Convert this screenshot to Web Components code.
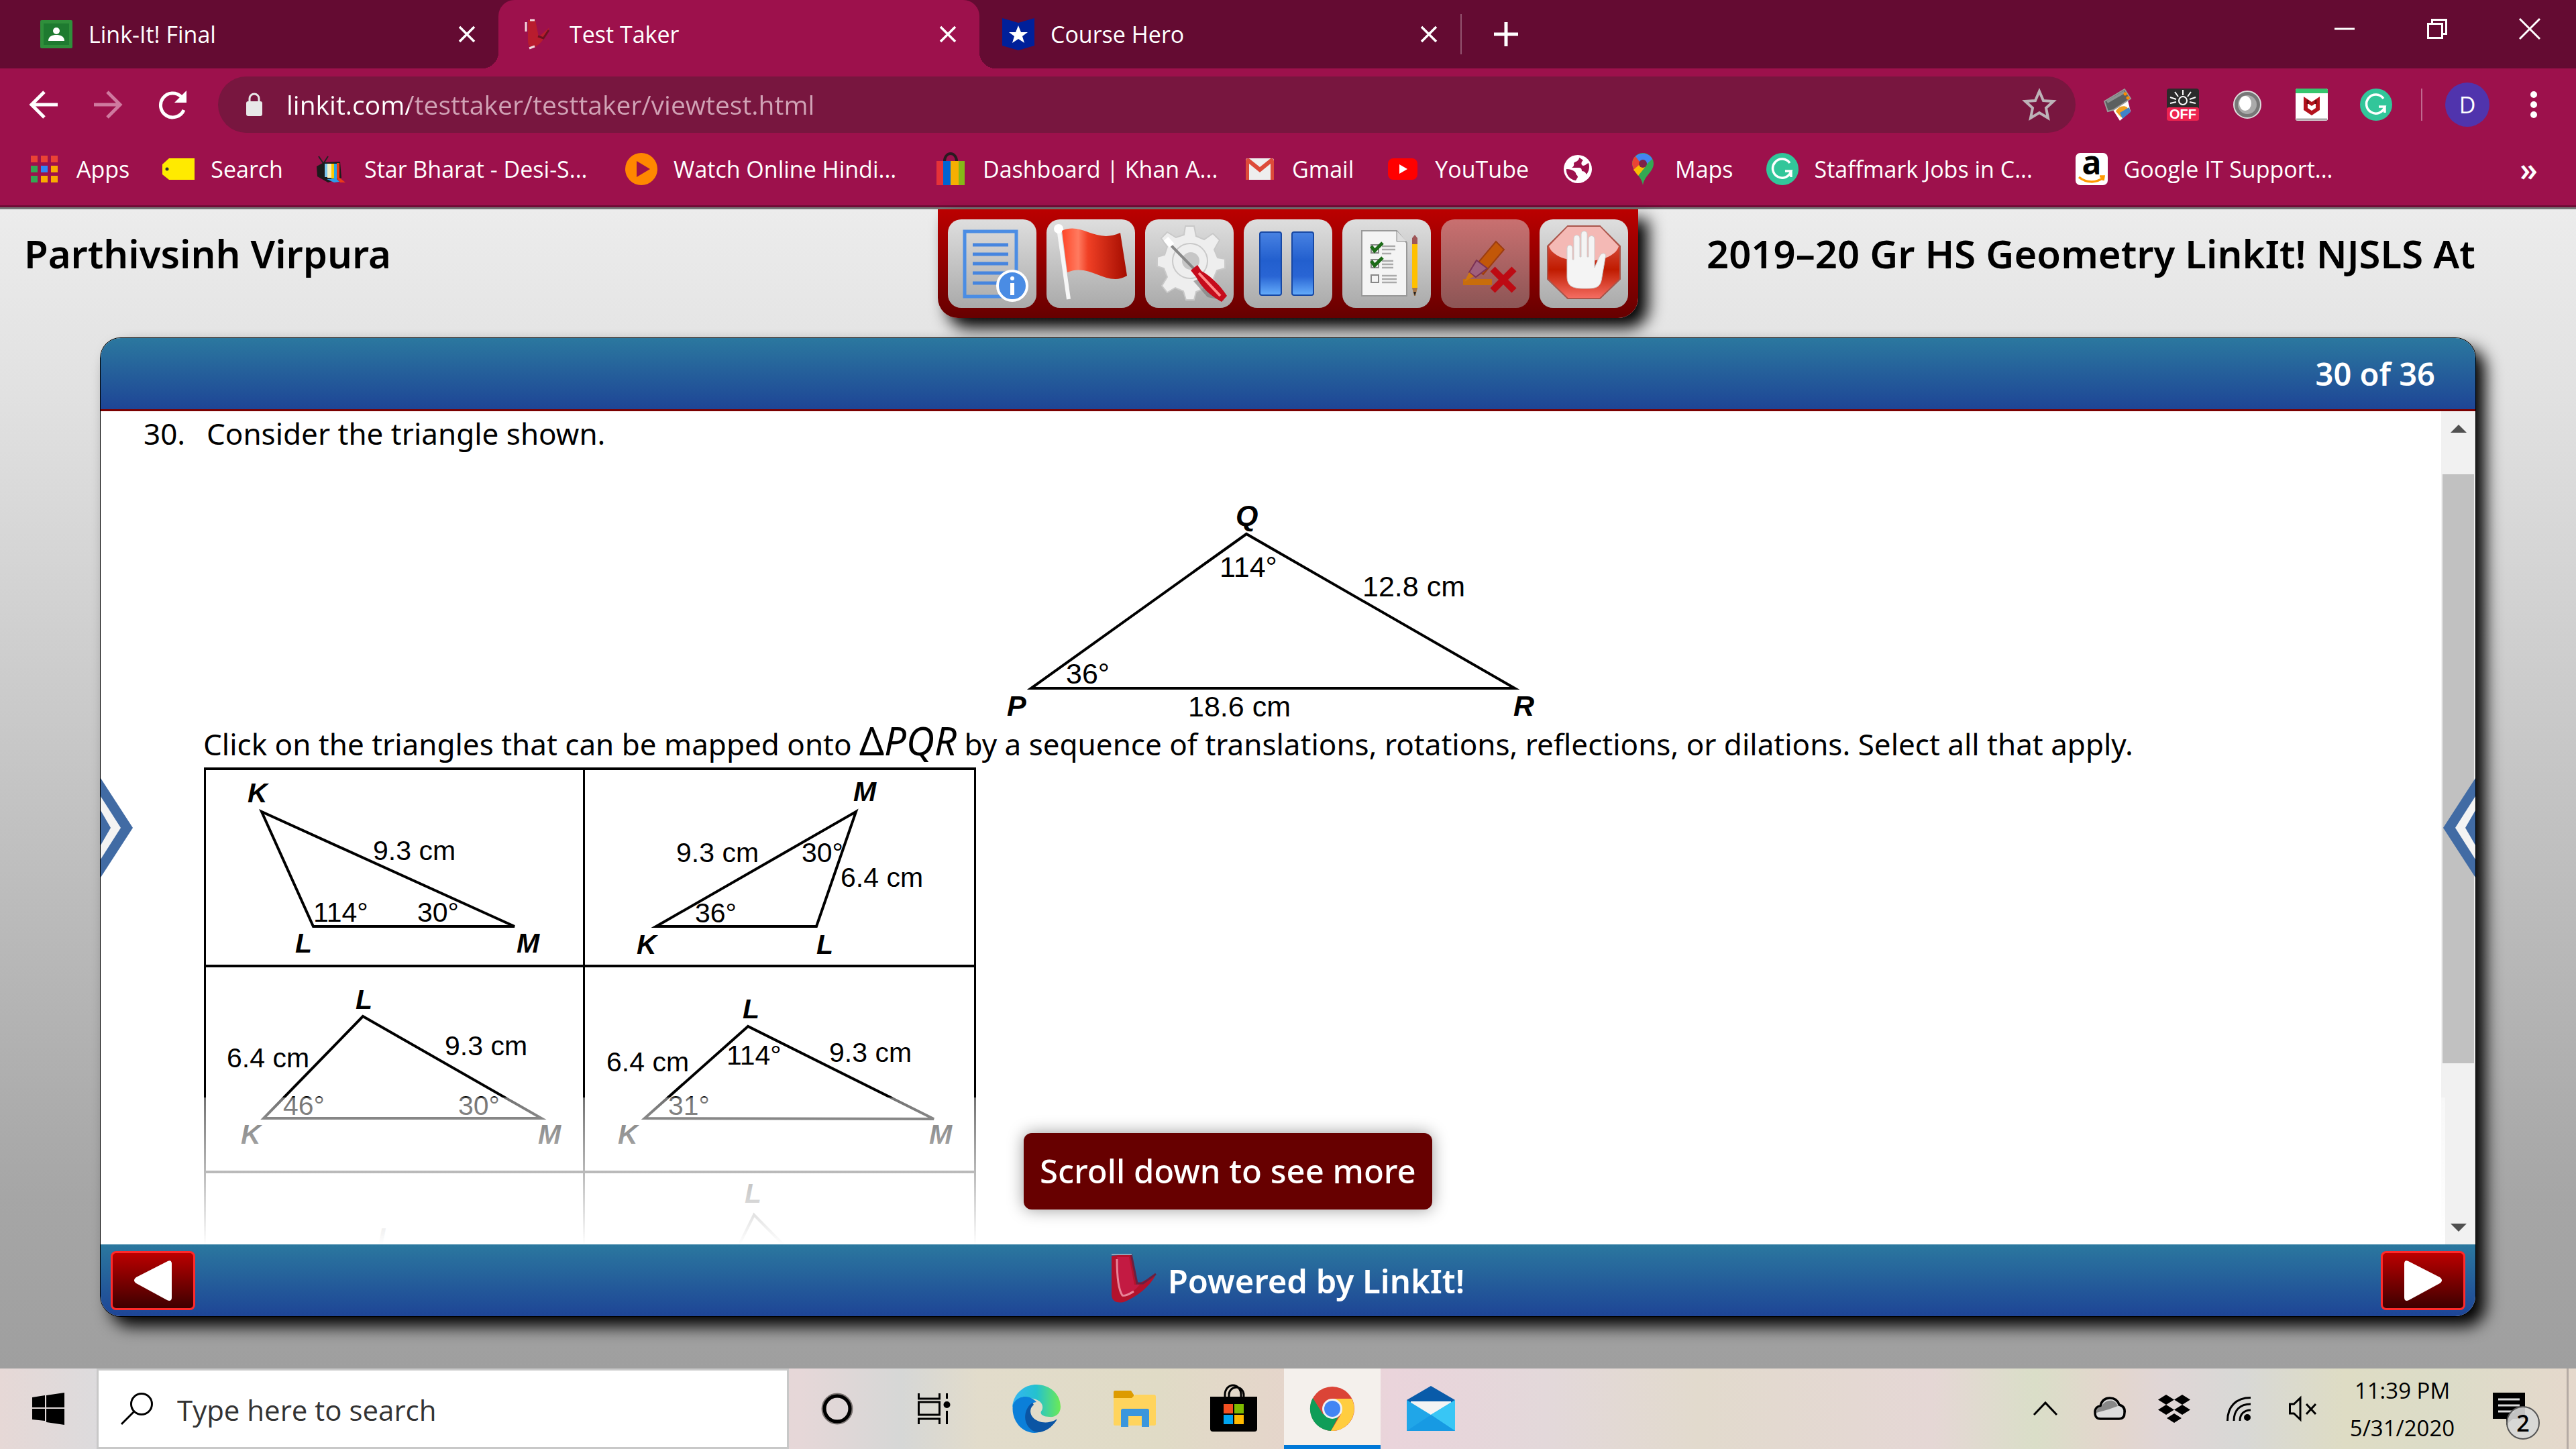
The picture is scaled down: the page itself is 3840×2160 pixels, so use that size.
<!DOCTYPE html>
<html lang="en">
<head>
<meta charset="utf-8">
<title>Test Taker</title>
<style>
html, body {
	margin: 0;
	height: 100%;
}

body {
	--ui-font: "Open Sans", "Noto Sans", sans-serif;
	--page-font: "Noto Sans", "Open Sans", sans-serif;
	--color-frame: #640b32;
	--color-toolbar: #9d114c;
	font-family: var(--ui-font);
	overflow: hidden;
}
</style>
</head>
<body>
<test-screen></test-screen>

<script>
const icons = {
	classroom: ['0 0 48 48', `<rect y="3" width="48" height="42" rx="2" fill="#2f8f3b"/><rect x="5" y="8" width="38" height="32" fill="#1e7a30"/><circle cx="24" cy="19" r="5" fill="#fff"/><path d="M12 34c0-7 6-9 12-9s12 2 12 9z" fill="#fff"/>`],
	linkit: ['0 0 48 48', `<path d="M10 3h11l5 25 16-14c-5 12-12 26-24 30-7 1-8-6-8-12z" fill="#b91c2e"/><path d="M7 6v14M20 3l-7 0M12 45l8-3" stroke="#f3d8dc" stroke-width="3"/><path d="M25 27l8 3 8-12" fill="none" stroke="#6c1220" stroke-width="3"/>`],
	linkitBig: ['0 0 72 84', `<path d="M0 5l29-3 9 46 28-15C57 51 38 66 18 74 6 76 1 72 0 64z" fill="#b3122c"/><path d="M8 7h18l8 41 8 0C34 58 26 62 17 64 11 60 8 38 8 7z" fill="#c31a42"/><path d="M8 10c0 25 2 45 8 54 5 2 12-3 17-6" fill="none" stroke="#e88498" stroke-width="3"/><path d="M29 2l9 44 9 0 19-14" fill="none" stroke="#6a2040" stroke-width="3"/><path d="M0 3h30" stroke="#8fa5ba" stroke-width="2"/>`],
	hero: ['0 0 48 48', `<path d="M0 0l24 7 24-7v41l-24 7-24-7z" fill="#00209a"/><path d="M24 11l4 10h10l-8 6 3 10-9-6-9 6 3-10-8-6h10z" fill="#fff"/>`],
	close: ['0 0 24 24', `<path d="M1 1l22 22M23 1L1 23" stroke="#fff" stroke-width="3.6"/>`],
	plus: ['0 0 36 36', `<path d="M18 0v36M0 18h36" stroke="#fff" stroke-width="5"/>`],
	minimize: ['0 0 30 30', `<path d="M0 15h30" stroke="#fff" stroke-width="3"/>`],
	restore: ['0 0 30 30', `<path d="M1.500 7.500h21v21h-21zM7.500 7V1.500h21v21H23" fill="none" stroke="#fff" stroke-width="3"/>`],
	exit: ['0 0 30 30', `<path d="M0 0l30 30M30 0L0 30" stroke="#fff" stroke-width="3"/>`],
	back: ['0 0 42 42', `<path d="M42 21H4M22 2L3 21l19 19" fill="none" stroke="currentColor" stroke-width="5"/>`],
	forward: ['0 0 42 42', `<path d="M0 21h38M20 2l19 19-19 19" fill="none" stroke="currentColor" stroke-width="5"/>`],
	reload: ['0 0 42 42', `<path d="M38 29A18 18 0 1 1 34 9" fill="none" stroke="#fff" stroke-width="5"/><path d="M42 0v18H24z" fill="#fff"/>`],
	lock: ['0 0 24 34', `<rect y="12" width="24" height="22" rx="3" fill="#e8e8e8"/><path d="M5 13V8a7 7 0 0 1 14 0v5" fill="none" stroke="#e8e8e8" stroke-width="3"/>`],
	star: ['0 0 48 48', `<path d="M24 4l6 14 15 1-11 10 3 15-13-8-13 8 3-15L3 19l15-1z" fill="none" stroke="#bdb3b8" stroke-width="4"/>`],
	scanner: ['0 0 48 48', `<path d="M12 26l14 22 16-14-4-16z" fill="#fff"/><path d="M20 34c3-7 12-10 17-6 4 6-2 14-9 15z" fill="#f0a020"/><path d="M26 36l14-8 2 7-12 10z" fill="#3f83c9"/><path d="M3 19L33 1l9 14-26 17-8 2z" fill="#5b5f5f" stroke="#999" stroke-width="2"/><path d="M7 20L33 5" stroke="#8d9292" stroke-width="4"/><circle cx="34" cy="8" r="2.500" fill="#ff8b00"/><circle cx="38" cy="14" r="2.500" fill="#ff8b00"/>`],
	lightOff: ['0 0 48 48', `<rect width="48" height="48" rx="4" fill="#2b2b2b"/><circle cx="24" cy="18" r="6" fill="none" stroke="#fff" stroke-width="2"/><path d="M24 2v8M12 5l5 7M36 5l-5 7M5 13l9 3M43 13l-9 3M5 22l9-2M43 22l-9-2" stroke="#fff" stroke-width="2"/><rect y="28" width="48" height="20" rx="3" fill="#ed2350"/><text x="24" y="45" text-anchor="middle" font-family="Liberation Sans" font-weight="700" font-size="20" fill="#fff">OFF</text>`],
	orb: ['0 0 48 48', `<circle cx="24" cy="24" r="20" fill="#777" stroke="#ddd" stroke-width="2"/><circle cx="24" cy="24" r="14" fill="#aaa"/><ellipse cx="21" cy="22" rx="9" ry="11" fill="#fff"/>`],
	mcafee: ['0 0 48 48', `<rect width="48" height="48" rx="3" fill="#fff"/><path d="M0 7V3a3 3 0 0 1 3-3h42a3 3 0 0 1 3 3v4z" fill="#35c66e"/><path d="M1 46h46" stroke="#aaa" stroke-width="3"/><path d="M12 12l12 8 12-8v20l-12 8-12-8z" fill="#b3111c"/><path d="M18 22l6 4 6-4v7l-6 4-6-4z" fill="#fff"/><path d="M18 17v6M30 17v6" stroke="#6c0b12" stroke-width="3"/>`],
	grammarly: ['0 0 48 48', `<circle cx="24" cy="24" r="24" fill="#32c69a"/><path d="M35 15A14 14 0 1 0 37 27H28M37 26v10" fill="none" stroke="#fff" stroke-width="3.500"/>`],
	dots: ['0 0 12 42', `<g fill="#fff"><circle cx="6" cy="6" r="5"/><circle cx="6" cy="21" r="5"/><circle cx="6" cy="36" r="5"/></g>`],
	apps: ['0 0 48 48', `<g fill="#ea4335"><path d="M4 4h10v10H4zM19 4h10v10H19zM34 4h10v10H34z"/></g><path d="M4 19h10v10H4zM4 34h10v10H4z" fill="#34a853"/><path d="M19 19h10v10H19z" fill="#2f86f6"/><path d="M34 19h10v10H34zM19 34h10v10H19zM34 34h10v10H34z" fill="#f9ab00"/>`],
	tag: ['0 0 48 48', `<path d="M10 8h38v32H10L0 32V17z" fill="#ffea00"/><circle cx="7" cy="24" r="2.500" fill="#333"/>`],
	tv: ['0 0 48 48', `<path d="M4 5l8 12M18 5l-7 11" stroke="#222" stroke-width="2"/><path d="M1 20l11-6 24-1 2 24-20 7L2 35z" fill="#1b1b1b"/><path d="M13 16h4v20h-4z" fill="#7cc6ef"/><path d="M17 16h6v21h-6z" fill="#f2efc3"/><path d="M23 16h4v22h-4z" fill="#ffc900"/><path d="M27 16h4v24h-4z" fill="#28a5e8"/><path d="M31 15h4v22l9 7-8 0-5-6z" fill="#ea3b18"/><path d="M16 39l14-1 5 5-8 1z" fill="#2d9cea"/>`],
	play: ['0 0 48 48', `<circle cx="24" cy="24" r="24" fill="#ff8800"/><path d="M17 12l20 12-20 12z" fill="#9d114c"/>`],
	bag: ['0 0 48 48', `<path d="M15 12a9 11 0 0 1 18 0" fill="none" stroke="#2a1a20" stroke-width="4"/><path d="M3 12h10v36H3z" fill="#e53238"/><path d="M13 12h11v36H13z" fill="#0064d2"/><path d="M24 12h12v36H24z" fill="#f5af02"/><path d="M36 12h9v36h-9z" fill="#86b817"/>`],
	gmail: ['0 0 48 48', `<rect x="3" y="8" width="42" height="32" rx="3" fill="#eee"/><path d="M3 12v28h5V16l16 13 16-13v24h5V12c0-4-4-5-6-3L24 21 9 9c-2-2-6-1-6 3z" fill="#dd4b39"/>`],
	youtube: ['0 0 48 48', `<rect x="2" y="8" width="44" height="32" rx="8" fill="#f00"/><path d="M19 17l12 7-12 7z" fill="#fff"/>`],
	globe: ['0 0 48 48', `<circle cx="24" cy="24" r="21" fill="#fff"/><path d="M26 7c0 5-6 6-8 8 1 4-1 6-3 7h11c4 0 4 4 4 5 4 0 6 3 7 5 4-5 5-12 3-17-3 1-5 4-8 4-4-1-3-6 0-8-2-1-3-3-6-4z" fill="#9d114c"/><path d="M7 24c6 0 12 2 14 6 0 3 3 3 3 6l-3 5C12 40 6 32 7 24z" fill="#9d114c"/>`],
	maps: ['0 0 48 48', `<path d="M24 48C22 34 8 28 8 16A16 16 0 0 1 24 0a16 16 0 0 1 16 16C40 28 26 34 24 48z" fill="#34a853"/><path d="M8 17A16 16 0 0 1 14 4l10 12-13 11z" fill="#ea4335"/><path d="M13 5A16 16 0 0 1 38 9L25 21z" fill="#4285f4"/><path d="M10 25l14-12 5 6-12 15z" fill="#fbbc04"/><circle cx="24" cy="16" r="6" fill="#7d2149"/>`],
	amazon: ['0 0 48 48', `<rect width="48" height="48" rx="7" fill="#fff"/><text x="24" y="32" text-anchor="middle" font-family="Open Sans" font-weight="700" font-size="48" fill="#000">a</text><path d="M5 36c11 9 26 9 36 1M36 35l6 0-1 6" fill="none" stroke="#ff9900" stroke-width="3.500"/>`],
	info: ['0 0 132 132', `<path d="M25 18h77v97H25z" fill="none" stroke="#4b8de4" stroke-width="5"/><path d="M37 38h53M37 52h53M37 66h53M37 80h53M37 95h38" stroke="#4685df" stroke-width="5"/><circle cx="96" cy="99" r="22" fill="#4a8ce4" stroke="#fff" stroke-width="4"/><circle cx="96" cy="88" r="3" fill="#fff"/><path d="M96 95v18" stroke="#fff" stroke-width="6"/>`],
	flag: ['0 0 132 132', `<defs><linearGradient id="flagRed"><stop stop-color="#ff4527"/><stop offset=".25" stop-color="#ff7b60"/><stop offset=".4" stop-color="#f04025"/><stop offset="1" stop-color="#a40c00"/></linearGradient></defs><path d="M18 13l15 106" stroke="#f7f7f7" stroke-width="6"/><circle cx="18" cy="14" r="7" fill="#fff"/><path d="M23 17c30-14 50 20 87 3l10 64c-30 18-55-20-89-5z" fill="url(#flagRed)"/>`],
	tools: ['0 0 132 132', `<g fill="#eee" stroke="#c9c9c9" stroke-width="2"><path d="M60 10h13l3 15 12 5 13-9 10 10-8 14 5 12 11 2v14l-12 3-5 12 8 14-10 9-12-8-12 5-3 12H61l-4-13-12-5-12 7-8-10 8-13-5-13-10-3V56l11-3 4-12-9-13 9-9 13 8 12-4z"/><circle cx="67" cy="62" r="26"/></g><circle cx="68" cy="62" r="13" fill="#c6c6c6"/><path d="M72 92l14-6 32 35-25-5z" fill="#777" opacity=".6"/><path d="M34 34l41 42" stroke="#888" stroke-width="4"/><path d="M31 29l9 10" stroke="#fff" stroke-width="9"/><path d="M68 76l10-8 6 9c16 9 29 23 38 37l-8 9C97 113 85 103 76 86z" fill="#c60b1c"/><path d="M80 80l32 34" stroke="#ff8c8c" stroke-width="4"/>`],
	pause: ['0 0 132 132', `<defs><linearGradient id="pauseBlue" x2="0" y2="1"><stop stop-color="#4882e2"/><stop offset=".45" stop-color="#225fce"/><stop offset=".7" stop-color="#2965d4"/><stop offset="1" stop-color="#65adfb"/></linearGradient></defs><rect x="24" y="19" width="32" height="94" rx="3" fill="url(#pauseBlue)" stroke="#1748a4" stroke-width="2"/><rect x="72" y="19" width="32" height="94" rx="3" fill="url(#pauseBlue)" stroke="#1748a4" stroke-width="2"/>`],
	checklist: ['0 0 132 132', `<path d="M29 17h52l15 18v79H29z" fill="#f4f4f4" stroke="#999" stroke-width="2"/><path d="M81 17v16h15" fill="#ddd" stroke="#888"/><path d="M59 40h20M59 45h20M59 51h14M59 62h17M59 67h17M59 72h17M59 84h22M59 89h22M59 94h22" stroke="#aaa" stroke-width="2.500"/><path d="M43 38h11v12H43zM43 60h11v12H43zM43 83h11v11H43z" fill="none" stroke="#888" stroke-width="2"/><path d="M43 40l5 7 12-12M43 62l5 7 12-12" fill="none" stroke="#1d6b18" stroke-width="5"/><path d="M104 37h8v65h-8z" fill="#ffc000"/><path d="M104 37v-9l4-5 4 5v9z" fill="#9e5557"/><path d="M104 102h8l-3 12h-2z" fill="#a87849"/><path d="M106 108h4l-2 6z" fill="#222"/>`],
	highlighter: ['0 0 132 132', `<path d="M33 89h43v9H33z" fill="#c86d0c"/><path d="M82 33l12 12-31 37-14-10z" fill="#c25708" stroke="#9d3d10" stroke-width="2"/><path d="M53 61l16 12-17 13-10-7z" fill="#a05f7c" stroke="#7b3155" stroke-width="2"/><path d="M42 79l7 6-14 8z" fill="#cf7710"/><path d="M77 74l32 32M109 74l-32 32" stroke="#bd0a13" stroke-width="10"/>`],
	stop: ['0 0 132 132', `<defs><linearGradient id="stopRed" x2="0" y2="1"><stop stop-color="#e56b61"/><stop offset=".6" stop-color="#c01b00"/><stop offset="1" stop-color="#f56e63"/></linearGradient></defs><path d="M42 10h48l30 30v49l-30 29H42L12 89V40z" fill="url(#stopRed)" stroke="#a8554b" stroke-width="2"/><path d="M42 11h48l28 29c-8 30-95 30-104 0z" fill="#f4b9b5"/><path d="M41 43c0-6 8-6 8 0v17h2V28c0-6 9-6 9 0v28h2V22c0-6 9-6 9 0v34h2V29c0-6 9-6 9 0v43l7-16c3-8 12-6 9 1L93 86c-2 17-10 17-26 17s-26-2-26-18z" fill="#f4f4f4" stroke="#ccc"/>`],
	left: ['0 0 56 62', `<path d="M50 2c4-2 6 0 6 4v50c0 5-3 6-7 4L3 35c-4-3-4-6 0-9z" fill="#fff"/>`],
	right: ['0 0 56 62', `<path d="M6 2C2 0 0 2 0 6v50c0 5 3 6 7 4l46-25c4-3 4-6 0-9z" fill="#fff"/>`],
	windows: ['0 0 48 48', `<path d="M0 7l19-3v18H0zM21 4l27-4v22H21zM0 24h19v18L0 40zM21 24h27v24l-27-4z"/>`],
	search: ['0 0 48 48', `<circle cx="31" cy="17" r="15.500" fill="none" stroke="#000" stroke-width="3"/><path d="M20 28L1 47" stroke="#000" stroke-width="3"/>`],
	cortana: ['0 0 48 48', `<circle cx="24" cy="24" r="20" fill="none" stroke="#7b7472" stroke-width="7"/><circle cx="24" cy="24" r="19" fill="none" stroke="#000" stroke-width="5"/>`],
	taskview: ['0 0 48 48', `<path d="M1.500 1v8h31V1M1.500 14h31v19h-31zM1.500 47v-8h31v8M43.500 1v8M43.500 27v20" fill="none" stroke="#000" stroke-width="3"/><circle cx="43.500" cy="18" r="5"/>`],
	edge: ['0 0 72 72', `<defs><linearGradient id="edgeTop"><stop stop-color="#35b5f3"/><stop offset=".5" stop-color="#24c1cf"/><stop offset="1" stop-color="#6cea55"/></linearGradient></defs><path d="M0 34C1 14 17 0 36 0c21 0 36 15 36 33 0 11-8 16-17 15-9 0-14-4-12-8 5-7 1-15-8-18C22 18 8 17 0 34z" fill="url(#edgeTop)"/><path d="M1 30C7 16 25 14 36 26c-8 1-12 7-12 15 1 16 14 22 30 21-7 8-18 12-28 9C9 67-2 48 1 30z" fill="#0b7fd9"/><path d="M30 27c-13 9-15 29-2 40 5 4 11 5 17 3 9-3 16-9 21-17 1-2-1-1-2 0-12 6-27 4-34-5-5-7-3-14 2-18z" fill="#0b55a4"/>`],
	explorer: ['0 0 66 54', `<path d="M1 2q0-2 2-2h24l4 6v9H1z" fill="#dd9b00"/><path d="M1 11h27l5-5h28q3 0 3 3v41q0 2-2 2H3q-2 0-2-2z" fill="#ffd45d"/><path d="M12 54V30q0-3 3-3h36q3 0 3 3v24H43V38H23v16z" fill="#3a96dd"/>`],
	store: ['0 0 72 72', `<path d="M23 20V15a12 14 0 0 1 24 0v5M29 20V15a10 10 0 0 1 22 0v5" fill="none" stroke="#000" stroke-width="3"/><path d="M1 18h70v48q0 4-4 4H5q-4 0-4-4z"/><path d="M21 29h14v14H21z" fill="#f25022"/><path d="M37 29h14v14H37z" fill="#7fba00"/><path d="M21 45h14v14H21z" fill="#00a4ef"/><path d="M37 45h14v14H37z" fill="#ffb900"/>`],
	chrome: ['0 0 66 66', `<circle cx="33" cy="33" r="33" fill="#db4437"/><path d="M4 17A33 33 0 0 0 31 66L43 43 19 41z" fill="#0f9d58"/><path d="M33 18h29A33 33 0 0 1 31 66L46 41z" fill="#ffcd40"/><circle cx="33" cy="33" r="15" fill="#f1f1f1"/><circle cx="33" cy="33" r="12" fill="#4285f4"/>`],
	mail: ['0 0 72 72', `<path d="M0 23L36 2l36 21-3 5H3z" fill="#095ba9"/><path d="M6 25h60v16L36 60 6 41z" fill="#f4f4f4"/><path d="M0 23l36 22 36-22v46H0z" fill="#29b4ee"/><path d="M36 45l36-22v46z" fill="#38c6f5"/><path d="M0 69l36-24 36 24z" fill="#1397e2"/><path d="M0 23l72 46H0z" fill="#1b9de5" opacity=".6"/>`],
	chevron: ['0 0 36 24', `<path d="M1 21L18 3l17 18" fill="none" stroke="#000" stroke-width="3"/>`],
	cloud: ['0 0 48 36', `<path d="M10 33C3 33 2 28 2 23c0-6 4-9 8-9C12 5 18 2 24 2c8 0 12 4 14 10 7 2 9 6 8 12 0 6-3 9-8 9z" fill="#ddd" stroke="#000" stroke-width="3.500"/><path d="M4 24c0-6 3-9 8-9 2-9 19-15 24-1L22 19z" fill="#888"/>`],
	dropbox: ['0 0 48 42', `<path d="M12 0l12 7.500L12 15 0 7.500zM36 0l12 7.500L36 15 24 7.500zM12 15l12 7.500L12 30 0 22.500zM36 15l12 7.500L36 30l-12-7.500zM24 28l11 7-11 7-11-7z"/>`],
	wifi: ['0 0 36 36', `<path d="M1.500 36C1.500 15 14 1.500 36 1.500M11 36c0-16 9-25 25-25M20 36c0-10 6-16 16-16" fill="none" stroke="#000" stroke-width="3"/><circle cx="31" cy="31" r="5"/>`],
	mute: ['0 0 42 36', `<path d="M1.500 11h6L17 2v32l-9.500-9h-6z" fill="none" stroke="#000" stroke-width="3"/><path d="M26 11l14 15M40 11L26 26" stroke="#000" stroke-width="3"/>`],
	notice: ['0 0 48 48', `<path d="M0 0h48v39H30l-10 9v-9H0z"/><path d="M8 10h32M8 19h32M8 28h24" stroke="#ddd" stroke-width="3"/>`]
};

function makeTemplate(styles, markup) {
	let template = document.createElement('template');
	template.innerHTML = `<style>
*, *::before, *::after { box-sizing: border-box; }
button, input { font: inherit; color: inherit; border: 0; margin: 0; padding: 0; background: none; }
a { color: inherit; text-decoration: none; }
${styles}</style>${markup}`;
	return template;
}

function defineSimple(tag, styles, markup) {
	let template = makeTemplate(styles, markup);

	customElements.define(tag, class extends HTMLElement {
		constructor() {
			super();
			this.attachShadow({ mode: 'open' }).append(template.content.cloneNode(true));
		}
	});
}

// <svg-icon name="close" size="24">, size is the width in pixels
class SvgIcon extends HTMLElement {
	connectedCallback() {
		if (this.shadowRoot) return;
		let [viewBox, shapes] = icons[this.getAttribute('name')];
		let size = this.getAttribute('size') || 48;
		this.attachShadow({ mode: 'open' }).innerHTML = `
<style>:host { display: block; flex: none; width: ${size}px; } svg { display: block; width: 100%; overflow: visible; }</style>
<svg viewBox="${viewBox}" aria-hidden="true">${shapes}</svg>`;
	}
}
customElements.define('svg-icon', SvgIcon);

// Tabs

const tabTemplate = makeTemplate(`
:host {
	box-sizing: border-box;
	display: flex;
	align-items: center;
	position: relative;
	width: 717px;
	height: 102px;
	padding: 0 35px 0 34px;
	color: #fff;
	font-size: 34px;
}
:host([active]) {
	background: var(--color-toolbar);
	border-radius: 24px 24px 0 0;
}
:host([active])::before, :host([active])::after {
	content: "";
	position: absolute;
	bottom: 0;
	width: 24px;
	height: 24px;
}
:host([active])::before {
	right: 100%;
	background: radial-gradient(circle at 0 0, transparent 24px, var(--color-toolbar) 24px);
}
:host([active])::after {
	left: 100%;
	background: radial-gradient(circle at 100% 0, transparent 24px, var(--color-toolbar) 24px);
}
.title { flex: 1; margin-left: 24px; white-space: nowrap; }
`, `
<slot name="icon"></slot>
<span class="title"><slot></slot></span>
<button aria-label="Close tab"><svg-icon name="close" size="24"></svg-icon></button>
`);

class BrowserTab extends HTMLElement {
	constructor() {
		super();
		this.attachShadow({ mode: 'open' }).append(tabTemplate.content.cloneNode(true));
	}
}
customElements.define('browser-tab', BrowserTab);

defineSimple('tab-strip', `
:host { display: flex; align-items: center; height: 102px; padding-left: 26px; background: var(--color-frame); }
.divider { width: 2px; height: 60px; margin-right: 48px; background: #92546f; }
.window { display: flex; align-self: flex-start; margin-left: auto; }
.window button { width: 138px; height: 86px; padding: 0 54px; }
`, `
<browser-tab><svg-icon slot="icon" name="classroom"></svg-icon>Link-It! Final</browser-tab>
<browser-tab active><svg-icon slot="icon" name="linkit"></svg-icon>Test Taker</browser-tab>
<browser-tab><svg-icon slot="icon" name="hero"></svg-icon>Course Hero</browser-tab>
<span class="divider"></span>
<button aria-label="New tab"><svg-icon name="plus" size="36"></svg-icon></button>
<div class="window">
	<button aria-label="Minimize"><svg-icon name="minimize" size="30"></svg-icon></button>
	<button aria-label="Restore"><svg-icon name="restore" size="30"></svg-icon></button>
	<button aria-label="Close"><svg-icon name="exit" size="30"></svg-icon></button>
</div>
`);

// Address bar

defineSimple('address-bar', `
:host { box-sizing: border-box; display: flex; align-items: center; height: 108px; padding: 0 57px 0 44px; color: #fff; background: var(--color-toolbar); }
.nav { display: flex; gap: 54px; }
.forward { color: #cf7a9f; }
.box { flex: 1; display: flex; align-items: center; height: 84px; margin: 0 40px 0 47px; padding: 0 30px 0 42px; border-radius: 42px; background: #78163f; }
input {
	flex: 1;
	margin-left: 36px;
	font-size: 39px;
	line-height: 60px;
	outline: none;
	color: transparent;
	background: linear-gradient(90deg, #fff 183px, #d1a3b6 183px);
	-webkit-background-clip: text;
	background-clip: text;
}
.extensions { display: flex; gap: 48px; }
.divider { width: 2px; height: 48px; margin: 0 34px 0 43px; background: #c06a8f; }
.avatar { width: 66px; height: 66px; margin-right: 60px; border-radius: 50%; font-size: 34px; text-align: center; background: #5034ad; }
`, `
<div class="nav">
	<button aria-label="Back"><svg-icon name="back" size="42"></svg-icon></button>
	<button class="forward" aria-label="Forward"><svg-icon name="forward" size="42"></svg-icon></button>
	<button aria-label="Reload"><svg-icon name="reload" size="42"></svg-icon></button>
</div>
<div class="box">
	<svg-icon name="lock" size="24"></svg-icon>
	<input aria-label="Address" value="linkit.com/testtaker/testtaker/viewtest.html">
	<button aria-label="Bookmark"><svg-icon name="star"></svg-icon></button>
</div>
<div class="extensions">
	<svg-icon name="scanner"></svg-icon>
	<svg-icon name="lightOff"></svg-icon>
	<svg-icon name="orb"></svg-icon>
	<svg-icon name="mcafee"></svg-icon>
	<svg-icon name="grammarly"></svg-icon>
</div>
<span class="divider"></span>
<button class="avatar">D</button>
<button aria-label="Menu"><svg-icon name="dots" size="12"></svg-icon></button>
`);

// Bookmarks

const bookmarkTemplate = makeTemplate(`
:host { display: block; }
a { display: flex; align-items: center; gap: 24px; }
:host([long]) span { width: 340px; }
:host([bare]) span { display: none; }
span { white-space: nowrap; }
`, `<a href="#"><svg-icon></svg-icon><span><slot></slot></span></a>`);

class BookmarkLink extends HTMLElement {
	constructor() {
		super();
		this.attachShadow({ mode: 'open' });
		let content = bookmarkTemplate.content.cloneNode(true);
		content.querySelector('svg-icon').setAttribute('name', this.getAttribute('icon'));
		this.shadowRoot.append(content);
	}
}
customElements.define('bookmark-link', BookmarkLink);

defineSimple('bookmark-bar', `
:host { box-sizing: border-box; display: flex; align-items: center; gap: 49px; height: 99px; padding: 0 57px 12px 42px; color: #fff; font-size: 34px; background: var(--color-toolbar); border-bottom: 3px solid #6f0c36; }
.more { margin-left: auto; font-size: 48px; line-height: 60px; font-weight: 600; }
`, `
<bookmark-link icon="apps">Apps</bookmark-link>
<bookmark-link icon="tag">Search</bookmark-link>
<bookmark-link icon="tv" long>Star Bharat - Desi-S...</bookmark-link>
<bookmark-link icon="play" long>Watch Online Hindi...</bookmark-link>
<bookmark-link icon="bag" long>Dashboard | Khan A...</bookmark-link>
<bookmark-link icon="gmail">Gmail</bookmark-link>
<bookmark-link icon="youtube">YouTube</bookmark-link>
<bookmark-link icon="globe" bare></bookmark-link>
<bookmark-link icon="maps">Maps</bookmark-link>
<bookmark-link icon="grammarly" long>Staffmark Jobs in C...</bookmark-link>
<bookmark-link icon="amazon" long>Google IT Support...</bookmark-link>
<button class="more">»</button>
`);

// Test page header

defineSimple('test-tools', `
:host {
	box-sizing: border-box;
	display: flex;
	gap: 15px;
	padding: 15px;
	height: 162px;
	border-radius: 0 0 30px 30px;
	background: linear-gradient(#bb0000, #660000);
	box-shadow: 15px 15px 24px #000;
}
button { width: 132px; height: 132px; border-radius: 20px; background: linear-gradient(#dedede, #aaa); }
button:disabled { background: linear-gradient(#c97070, #8c5555); }
`, `
<button aria-label="Directions"><svg-icon name="info" size="132"></svg-icon></button>
<button aria-label="Flag question"><svg-icon name="flag" size="132"></svg-icon></button>
<button aria-label="Tools"><svg-icon name="tools" size="132"></svg-icon></button>
<button aria-label="Pause"><svg-icon name="pause" size="132"></svg-icon></button>
<button aria-label="Review"><svg-icon name="checklist" size="132"></svg-icon></button>
<button aria-label="Clear highlight" disabled><svg-icon name="highlighter" size="132"></svg-icon></button>
<button aria-label="Submit"><svg-icon name="stop" size="132"></svg-icon></button>
`);

defineSimple('test-header', `
:host { box-sizing: border-box; display: grid; grid-template-columns: 1fr auto 1fr; height: 195px; border-top: 3px solid #777; font: 600 58px/80px var(--page-font); white-space: nowrap; }
div { padding: 26px 36px; }
div:last-child { padding-left: 102px; }
`, `
<div>Parthivsinh Virpura</div>
<test-tools></test-tools>
<div>2019–20 Gr HS Geometry LinkIt! NJSLS At</div>
`);

// Triangles. Points and labels share the coordinates of the view attribute.
// A label is "text x y"; single capitals are vertex names.

class TriangleFigure extends HTMLElement {
	connectedCallback() {
		if (this.shadowRoot) return;
		let view = this.getAttribute('view');
		let [, , width, height] = view.split(' ');
		let size = this.getAttribute('size') || 41;
		let labels = (this.getAttribute('labels') || '').split(';').map(label => {
			let [, text, x, y] = label.trim().match(/^(.+) (\d+) (\d+)$/);
			let vertex = /^[A-Z]$/.test(text) ? ' class="vertex"' : '';
			return `<text${vertex} x="${x}" y="${y}">${text}</text>`;
		}).join('');

		this.attachShadow({ mode: 'open' }).innerHTML = `
<style>
:host { display: block; }
svg { display: block; margin: 0 auto; overflow: hidden; }
polygon { fill: none; stroke: #000; stroke-width: 4; }
text { font: ${size}px "Liberation Sans", Arial, sans-serif; }
.vertex { font-weight: bold; font-style: italic; }
</style>
<svg viewBox="${view}" width="${width}" height="${height}">
<polygon points="${this.getAttribute('points') || ''}"/>${labels}
</svg>`;
	}
}
customElements.define('triangle-figure', TriangleFigure);

defineSimple('answer-grid', `
:host { display: grid; grid-template-columns: 565px 583px; width: max-content; border: solid #000; border-width: 4px 0 0 3px; }
button { display: block; border: solid #000; border-width: 0 3px 4px 0; overflow: hidden; }
`, `
<button><triangle-figure view="307 1148 562 290" points="390,1210 467,1381 767,1381"
	labels="K 369 1196; 9.3 cm 556 1282; 114° 467 1374; 30° 622 1374; L 440 1420; M 770 1420"></triangle-figure></button>
<button><triangle-figure view="872 1148 580 290" points="1276,1210 978,1381 1217,1381"
	labels="M 1272 1194; 9.3 cm 1008 1285; 30° 1195 1285; 6.4 cm 1253 1322; 36° 1036 1375; K 949 1422; L 1217 1422"></triangle-figure></button>
<button><triangle-figure view="307 1442 562 303" points="541,1515 393,1667 807,1667"
	labels="L 530 1504; 6.4 cm 338 1591; 9.3 cm 663 1573; 46° 422 1662; 30° 683 1662; K 359 1705; M 802 1705"></triangle-figure></button>
<button><triangle-figure view="872 1442 580 303" points="1115,1530 961,1667 1392,1668"
	labels="L 1107 1518; 6.4 cm 904 1597; 114° 1083 1587; 9.3 cm 1236 1583; 31° 996 1662; K 921 1705; M 1385 1705"></triangle-figure></button>
<button><triangle-figure view="307 1749 562 303" points="573,1873 420,2020 800,2020"
	labels="L 563 1859"></triangle-figure></button>
<button><triangle-figure view="872 1749 580 303" points="1124,1811 1020,2020 1330,2020"
	labels="L 1110 1793"></triangle-figure></button>
`);

// Question area

defineSimple('test-question', `
:host { box-sizing: border-box; display: grid; grid-template-columns: 94px 1fr; align-content: start; padding: 3px 0 0 64px; font: 44px/60px var(--page-font); color: #000; }
p { margin: 0; white-space: nowrap; }
.body { min-width: 0; }
.prompt { margin: 0 0 5px -5px; }
.math { font-size: 58px; line-height: 1px; }
answer-grid { margin-left: -4px; }
`, `
<p>30.</p>
<div class="body">
	<p>Consider the triangle shown.</p>
	<triangle-figure size="43" view="1464 676 1020 403" points="1858,796 1537,1026 2258,1026"
		labels="Q 1842 783; 114° 1818 860; 12.8 cm 2031 889; 36° 1589 1019; P 1501 1067; R 2256 1067; 18.6 cm 1771 1068"></triangle-figure>
	<p class="prompt">Click on the triangles that can be mapped onto <span class="math">Δ<i>PQR</i></span> by a sequence of translations, rotations, reflections, or dilations. Select all that apply.</p>
	<answer-grid></answer-grid>
</div>
`);

defineSimple('scroll-rail', `
:host { display: flex; flex-direction: column; width: 51px; background: #f1f1f1; }
button { height: 51px; display: grid; place-items: center; }
button::before { content: ""; border: solid transparent; border-width: 0 12px 12px; border-bottom-color: #505050; }
button:last-child::before { border-width: 12px 12px 0; border-top-color: #505050; }
.track { flex: 1; padding: 43px 2px 0; }
.thumb { height: 80%; background: #c1c1c1; }
`, `
<button aria-label="Scroll up"></button>
<div class="track"><div class="thumb"></div></div>
<button aria-label="Scroll down"></button>
`);

defineSimple('side-handle', `
:host { display: block; position: absolute; z-index: 1; top: calc(50% - 73px); left: 0; width: 48px; }
:host([right]) { left: auto; right: 0; transform: scaleX(-1); }
button, svg { display: block; }
`, `
<button aria-label="Open panel"><svg width="48" height="148" viewBox="0 0 48 148"><path d="M0 0l48 74-48 74z" fill="#416ba4"/><path d="M0 27l30 47-30 47z" fill="#f3f3f3"/><path d="M0 48l15 26-15 26z" fill="#416ba4"/></svg></button>
`);

defineSimple('question-panel', `
:host {
	display: flex;
	flex-direction: column;
	position: relative;
	flex: 1;
	min-height: 0;
	margin: 0 150px 78px;
	border-radius: 30px;
	color: #fff;
	font: 600 47px/60px var(--page-font);
	background: #fff;
	box-shadow: 0 0 0 1px #000, 15px 15px 24px #000;
}
header, footer { flex: none; display: flex; align-items: center; background: linear-gradient(#2b789f, #1e4596); }
header { height: 109px; justify-content: flex-end; padding-right: 60px; border-bottom: 3px solid #7b0000; border-radius: 30px 30px 0 0; }
footer { height: 107px; justify-content: space-between; padding: 0 15px; border-radius: 0 0 30px 30px; }
main { position: relative; flex: 1; min-height: 0; display: flex; }
test-question { flex: 1; min-width: 0; overflow: hidden; }
.fade { position: absolute; left: 0; right: 45px; bottom: 0; height: 219px; background: linear-gradient(rgba(255, 255, 255, .45), #fff); }
.toast {
	position: absolute;
	left: 1376px;
	bottom: 52px;
	padding: 26px 24px 28px;
	border-radius: 12px;
	font-size: 49px;
	font-weight: 500;
	background: #670000;
	box-shadow: 0 0 24px rgba(0, 0, 0, .4);
	white-space: nowrap;
}
.brand { display: flex; align-items: center; gap: 12px; font-size: 49px; }
.step { display: grid; place-items: center; width: 126px; height: 88px; border: 3px solid #ff2a2a; border-radius: 8px; background: linear-gradient(#bb0000, #3d0000); }
`, `
<header>30 of 36</header>
<main>
	<test-question></test-question>
	<scroll-rail></scroll-rail>
	<div class="fade"></div>
	<button class="toast">Scroll down to see more</button>
</main>
<footer>
	<button class="step" aria-label="Previous"><svg-icon name="left" size="56"></svg-icon></button>
	<div class="brand"><svg-icon name="linkitBig" size="72"></svg-icon>Powered by LinkIt!</div>
	<button class="step" aria-label="Next"><svg-icon name="right" size="56"></svg-icon></button>
</footer>
<side-handle></side-handle>
<side-handle right></side-handle>
`);

// Windows task bar

defineSimple('task-bar', `
:host {
	display: flex;
	flex: none;
	height: 120px;
	color: #000;
	font-size: 34px;
	background: linear-gradient(90deg, #e6d8d6, #dcdbdd 4%, #e5d7d7 28%, #e6d7d8 31%, #d6d7d6 35%, #e2dccb 38%, #e0dbc6 45%, #e5d5cb 50%, #ead4db 54%, #e3d8da 60%, #e2dacd 66%, #e5d7d5 75%, #dadec8 79%, #e3d6cd 82%, #e0d6d6 84%, #d8d8d6 87%, #dedcc4 91%, #dcdcc8 95%, #e5d8cc);
}
button { display: grid; place-items: center; }
.start { width: 144px; }
.search { display: flex; align-items: center; gap: 36px; width: 1032px; padding-left: 33px; border: 3px solid #c8c8c8; background: #fff; }
.search input { flex: 1; padding-top: 3px; font-size: 42px; line-height: 60px; outline: none; }
.search input::placeholder { color: #333; opacity: 1; }
.apps { display: flex; gap: 3px; }
.apps button { width: 144px; }
.apps button:nth-child(2) { margin: 0 6px 0 -3px; }
.apps .open { background: #f4f0ec; border-bottom: 6px solid #0078d7; padding-top: 6px; }
.tray { display: flex; margin-left: auto; }
.tray button { width: 96px; }
.tray .clock { display: block; width: 200px; padding-top: 2px; font-size: 33px; line-height: 56px; text-align: center; }
.notice { position: relative; }
.tray .notice { width: 145px; padding: 0 27px 0 0; }
.badge { position: absolute; left: 55px; top: 56px; width: 50px; height: 50px; border: 2px solid #555; border-radius: 50%; font: 600 34px/46px var(--ui-font); background: rgba(215, 215, 215, .9); text-align: center; }
.desktop { width: 14px; border-left: 3px solid #b5aba4; }
`, `
<button class="start" aria-label="Start"><svg-icon name="windows"></svg-icon></button>
<label class="search"><svg-icon name="search"></svg-icon><input placeholder="Type here to search"></label>
<div class="apps">
	<button aria-label="Cortana"><svg-icon name="cortana"></svg-icon></button>
	<button aria-label="Task view"><svg-icon name="taskview"></svg-icon></button>
	<button aria-label="Edge"><svg-icon name="edge" size="72"></svg-icon></button>
	<button aria-label="File Explorer"><svg-icon name="explorer" size="66"></svg-icon></button>
	<button aria-label="Store"><svg-icon name="store" size="72"></svg-icon></button>
	<button class="open" aria-label="Chrome"><svg-icon name="chrome" size="66"></svg-icon></button>
	<button aria-label="Mail"><svg-icon name="mail" size="72"></svg-icon></button>
</div>
<div class="tray">
	<button aria-label="Hidden icons"><svg-icon name="chevron" size="36"></svg-icon></button>
	<button aria-label="OneDrive"><svg-icon name="cloud"></svg-icon></button>
	<button aria-label="Dropbox"><svg-icon name="dropbox"></svg-icon></button>
	<button aria-label="Network"><svg-icon name="wifi" size="36"></svg-icon></button>
	<button aria-label="Volume"><svg-icon name="mute" size="42"></svg-icon></button>
	<button class="clock">11:39 PM<br>5/31/2020</button>
	<button class="notice" aria-label="Notifications"><svg-icon name="notice"></svg-icon><span class="badge">2</span></button>
	<span class="desktop"></span>
</div>
`);

defineSimple('test-screen', `
:host { display: flex; flex-direction: column; height: 100vh; }
.page { display: flex; flex-direction: column; flex: 1; min-height: 0; background: linear-gradient(#ececec, #e2e2e2 15%, #a6a6a6 85%, #9f9f9f); }
`, `
<tab-strip></tab-strip>
<address-bar></address-bar>
<bookmark-bar></bookmark-bar>
<div class="page">
	<test-header></test-header>
	<question-panel></question-panel>
</div>
<task-bar></task-bar>
`);
</script>
</body>
</html>
